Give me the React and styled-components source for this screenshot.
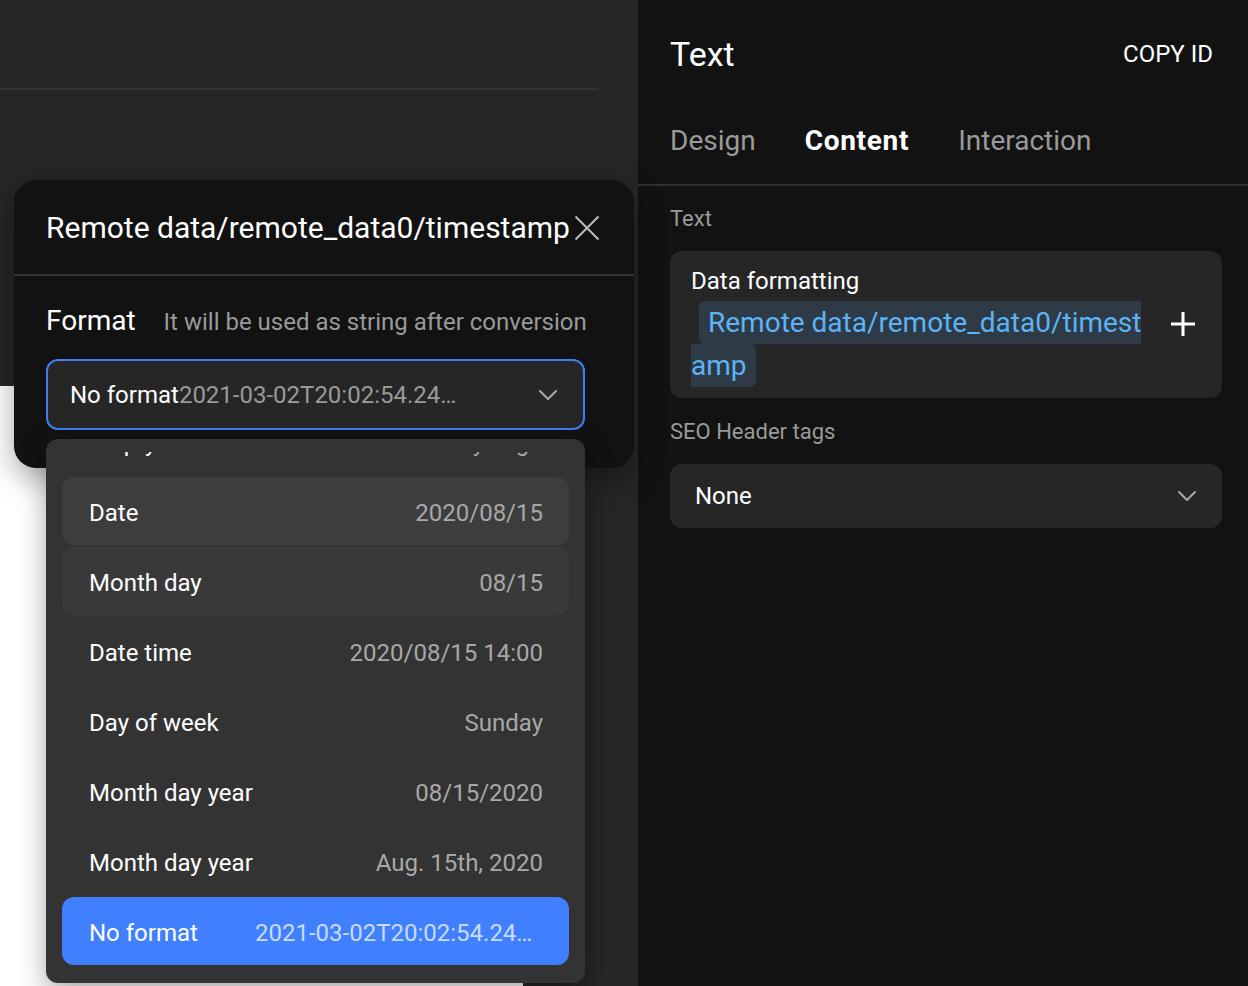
import React, { useLayoutEffect, useRef } from "react";
import styled, { createGlobalStyle } from "styled-components";

const GlobalStyle = createGlobalStyle`
  body {
    margin: 0;
    background: #262626;
    font-family: Roboto, "Noto Sans", "Liberation Sans", sans-serif;
    -webkit-font-smoothing: antialiased;
  }
  * { box-sizing: border-box; }
`;

const TIMESTAMP = "2021-03-02T20:02:54.245Z";

const formats = [
  { label: "Empty", value: "3 days ago" },
  { label: "Date", value: "2020/08/15", tone: "hover" },
  { label: "Month day", value: "08/15", tone: "soft" },
  { label: "Date time", value: "2020/08/15 14:00" },
  { label: "Day of week", value: "Sunday" },
  { label: "Month day year", value: "08/15/2020" },
  { label: "Month day year", value: "Aug. 15th, 2020" },
  { label: "No format", value: TIMESTAMP, tone: "active" },
];

const Chevron = () => (
  <svg width="18" height="10" viewBox="0 0 18 10" fill="none">
    <path d="M1 1l8 8 8-8" stroke="#a8a8a8" strokeWidth="2" strokeLinecap="round" strokeLinejoin="round" />
  </svg>
);

const CloseIcon = () => (
  <svg width="26" height="26" viewBox="0 0 26 26" fill="none">
    <path d="M1.5 1.5l23 23M24.5 1.5l-23 23" stroke="#bdbdbd" strokeWidth="2" />
  </svg>
);

const PlusIcon = () => (
  <svg width="26" height="26" viewBox="0 0 26 26" fill="none">
    <path d="M13 1v24M1 13h24" stroke="#fff" strokeWidth="3" />
  </svg>
);

const FormatMenu = () => {
  const listRef = useRef(null);

  // the list is scrolled to its end, so the selected item shows at the bottom
  useLayoutEffect(() => {
    if (listRef.current) listRef.current.scrollTop = listRef.current.scrollHeight;
  }, []);

  return (
    <Menu>
      <MenuList ref={listRef}>
        {formats.map((f, i) => (
          <MenuItem key={i} $tone={f.tone}>
            <ItemLabel>{f.label}</ItemLabel>
            <ItemValue $active={f.tone === "active"}>{f.value}</ItemValue>
          </MenuItem>
        ))}
      </MenuList>
    </Menu>
  );
};

const App = () => {
  return (
    <>
      <GlobalStyle />
      <Screen>
        <Canvas>
          <TopBar />
          <PagePreview />

          <Modal>
            <ModalHeader>
              <ModalTitle>Remote data/remote_data0/timestamp</ModalTitle>
              <CloseButton>
                <CloseIcon />
              </CloseButton>
            </ModalHeader>
            <ModalBody>
              <FieldRow>
                <FieldName>Format</FieldName>
                <FieldHint>It will be used as string after conversion</FieldHint>
              </FieldRow>
              <SelectWrap>
                <Select $focused>
                  <SelectText>
                    No format<SelectSub>{TIMESTAMP}</SelectSub>
                  </SelectText>
                  <Chevron />
                </Select>
                <FormatMenu />
              </SelectWrap>
            </ModalBody>
          </Modal>
        </Canvas>

        <Inspector>
          <InspectorHeader>
            <InspectorTitle>Text</InspectorTitle>
            <CopyButton>COPY ID</CopyButton>
          </InspectorHeader>
          <Tabs>
            <Tab>Design</Tab>
            <Tab $active>Content</Tab>
            <Tab>Interaction</Tab>
          </Tabs>
          <Section>
            <SectionLabel>Text</SectionLabel>
            <Card>
              <CardTitle>Data formatting</CardTitle>
              <BindingRow>
                <BindingText>
                  <Chip>Remote data/remote_data0/timestamp</Chip>
                </BindingText>
                <AddButton>
                  <PlusIcon />
                </AddButton>
              </BindingRow>
            </Card>
            <SectionLabel>SEO Header tags</SectionLabel>
            <Select>
              <SelectText>None</SelectText>
              <Chevron />
            </Select>
          </Section>
        </Inspector>
      </Screen>
    </>
  );
};

export default App;

const Screen = styled.div`
  display: flex;
  height: 100vh;
  overflow: hidden;
`;

const Canvas = styled.div`
  position: relative;
  width: 638px;
  flex-shrink: 0;
  display: flex;
  flex-direction: column;
  background: #262626;
`;

const TopBar = styled.div`
  height: 90px;
  margin-right: 40px;
  border-bottom: 2px solid #333;
  flex-shrink: 0;
`;

const PagePreview = styled.div`
  flex: 1;
  width: 523px;
  margin-top: 296px;
  background: #fff;
`;

const Modal = styled.div`
  position: absolute;
  left: 14px;
  top: 180px;
  width: 620px;
  background: #121212;
  border-radius: 22px;
  box-shadow: 0 10px 30px rgba(0, 0, 0, 0.35);
`;

const ModalHeader = styled.div`
  height: 96px;
  display: flex;
  align-items: center;
  gap: 4px;
  padding: 0 36px 0 32px;
  border-bottom: 2px solid #333;
`;

const ModalTitle = styled.h2`
  margin: 0;
  flex: 1;
  font-size: 30px;
  font-weight: 400;
  color: #fff;
  white-space: nowrap;
`;

const CloseButton = styled.div`
  display: flex;
  margin-top: 2px;
`;

const ModalBody = styled.div`
  padding: 30px 49px 38px 32px;
`;

const FieldRow = styled.div`
  display: flex;
  align-items: baseline;
  gap: 28px;
  line-height: 30px;
  white-space: nowrap;
`;

const FieldName = styled.span`
  font-size: 28px;
  color: #fff;
`;

const FieldHint = styled.span`
  font-size: 24px;
  color: #9a9a9a;
`;

const SelectWrap = styled.div`
  position: relative;
  margin-top: 22px;
`;

const Select = styled.div`
  display: flex;
  align-items: center;
  justify-content: space-between;
  height: ${(p) => (p.$focused ? "71px" : "64px")};
  padding: ${(p) => (p.$focused ? "0 26px 0 22px" : "0 26px 0 25px")};
  background: #262626;
  border-radius: 12px;
  border: ${(p) => (p.$focused ? "2px solid #3f7ef0" : "none")};
`;

const SelectText = styled.span`
  display: flex;
  font-size: 24px;
  color: #fff;
  white-space: nowrap;
`;

const SelectSub = styled.span`
  max-width: 278px;
  overflow: hidden;
  text-overflow: ellipsis;
  color: #9a9a9a;
`;

const Menu = styled.div`
  position: absolute;
  top: calc(100% + 9px);
  left: 0;
  width: 100%;
  height: 544px;
  padding: 13px 0 16px;
  display: flex;
  flex-direction: column;
  background: #333;
  border-radius: 12px;
  box-shadow: 0 10px 28px rgba(0, 0, 0, 0.35);
`;

const MenuList = styled.div`
  flex: 1;
  min-height: 0;
  display: flex;
  flex-direction: column;
  gap: 2px;
  padding: 0 16px 2px;
  overflow-y: auto;
  scrollbar-width: none;

  &::-webkit-scrollbar {
    display: none;
  }
`;

const itemBg = {
  hover: "#3d3d3d",
  soft: "#393939",
  active: "#4080ff",
};

const MenuItem = styled.div`
  flex-shrink: 0;
  height: 68px;
  display: flex;
  align-items: center;
  justify-content: space-between;
  gap: 24px;
  padding: 4px 26px 0 27px;
  border-radius: 12px;
  background: ${(p) => itemBg[p.$tone] || "transparent"};
`;

const ItemLabel = styled.span`
  font-size: 24px;
  color: #fff;
  white-space: nowrap;
`;

const ItemValue = styled.span`
  font-size: 24px;
  white-space: nowrap;
  overflow: hidden;
  text-overflow: ellipsis;
  max-width: 288px;
  color: ${(p) => (p.$active ? "rgba(255, 255, 255, 0.72)" : "#a8a8a8")};
`;

const Inspector = styled.div`
  flex: 1;
  background: #121212;
  display: flex;
  flex-direction: column;
`;

const InspectorHeader = styled.div`
  height: 108px;
  display: flex;
  align-items: center;
  justify-content: space-between;
  padding: 0 35px 0 32px;
`;

const InspectorTitle = styled.h1`
  margin: 0;
  font-size: 34px;
  font-weight: 400;
  color: #fff;
`;

const CopyButton = styled.span`
  font-size: 24px;
  color: #fff;
`;

const Tabs = styled.div`
  height: 78px;
  display: flex;
  align-items: center;
  gap: 49px;
  padding: 0 32px 12px;
  border-bottom: 2px solid #2f2f2f;
`;

const Tab = styled.span`
  font-size: 28px;
  font-weight: ${(p) => (p.$active ? 700 : 400)};
  letter-spacing: ${(p) => (p.$active ? "0.7px" : "0")};
  color: ${(p) => (p.$active ? "#fff" : "#9a9a9a")};
`;

const Section = styled.div`
  padding: 18px 26px 0 32px;
  display: flex;
  flex-direction: column;
`;

const SectionLabel = styled.div`
  font-size: 22px;
  line-height: 30px;
  color: #9a9a9a;
  margin-bottom: 17px;
`;

const Card = styled.div`
  background: #262626;
  border-radius: 12px;
  padding: 14px 26px 11px 21px;
  margin-bottom: 19px;
`;

const CardTitle = styled.div`
  font-size: 24px;
  line-height: 32px;
  color: #fff;
`;

const BindingRow = styled.div`
  display: flex;
  align-items: flex-start;
  margin-top: 4px;
`;

const BindingText = styled.div`
  flex: 1;
  min-width: 0;
  font-size: 28px;
  line-height: 43px;
  word-break: break-all;
`;

const Chip = styled.span`
  margin-left: 8px;
  padding: 5px 9px;
  border-radius: 6px;
  background: #2e3b47;
  color: #5cb4f5;
`;

const AddButton = styled.div`
  display: flex;
  margin: 10px 0 0 24px;
`;
